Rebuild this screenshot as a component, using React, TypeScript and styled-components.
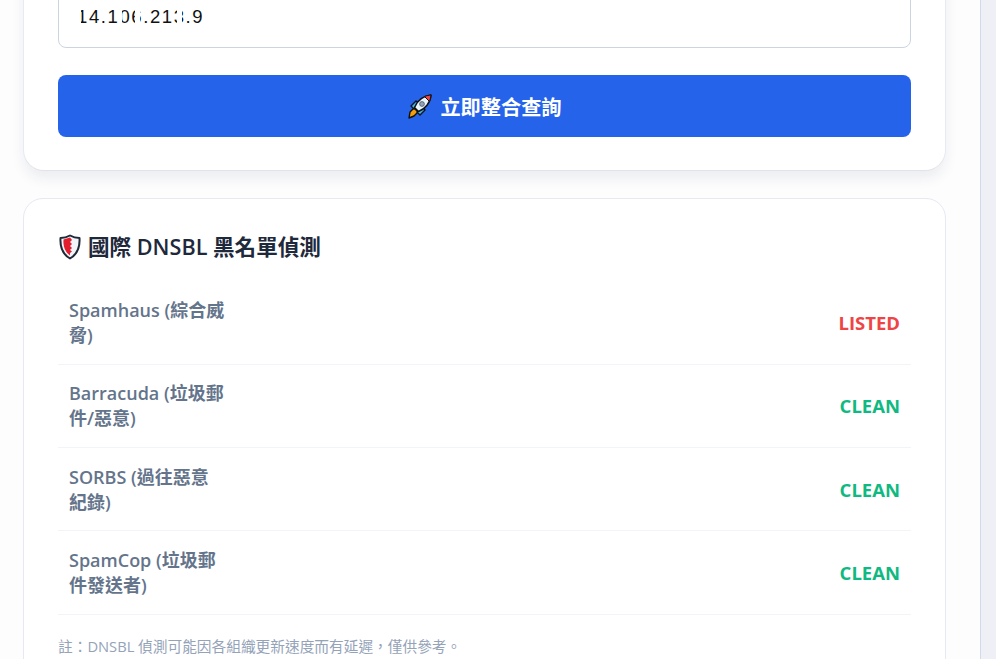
import React from 'react';
import styled, { createGlobalStyle } from 'styled-components';

const GlobalStyle = createGlobalStyle`
  html, body {
    margin: 0;
    padding: 0;
    height: 100%;
    overflow: hidden;
    background: #fdfdfe;
    font-family: "Open Sans", "Noto Sans CJK TC", sans-serif;
  }
`;

const Shell = styled.div`
  display: flex;
  height: 659px;
  overflow: hidden;
`;

const Page = styled.main`
  flex: 1;
  min-width: 0;
  padding: 0 34px 0 23px;
  overflow: hidden;
`;

const Scrollbar = styled.div`
  width: 15px;
  flex: none;
  background: #eef0f6;
  border-left: 1px solid #d3d9e8;
`;

const Card = styled.section`
  box-sizing: border-box;
  background: #fff;
  border-radius: 20px;
  padding: 34px;
  margin-bottom: 28px;
  border: 1px solid #e6e9f2;
`;

const FormCard = styled(Card)`
  margin: -100px 1px 28px;
  height: 270px;
  padding: 60px 34px 0;
  border: none;
  box-shadow: 0 8px 14px rgba(30, 41, 59, 0.08), 0 0 0 1px #f0f2f7;
`;

const IpField = styled.div`
  box-sizing: border-box;
  height: 88px;
  padding: 44px 18px 0;
  border: 1px solid #cbd5e1;
  border-radius: 8px;
  color: #111;
  font-size: 18.5px;
  line-height: 24px;
  letter-spacing: 1.6px;
  font-family: "Liberation Sans", sans-serif;
`;

const Ip = styled.span`
  position: relative;
  display: inline-block;
`;

const Smudge = styled.i<{ $left: number; $width: number }>`
  position: absolute;
  top: 0;
  bottom: 0;
  left: ${({ $left }) => $left}px;
  width: ${({ $width }) => $width}px;
  background: #fff;
`;

const SubmitButton = styled.button`
  display: flex;
  align-items: center;
  justify-content: center;
  gap: 7px;
  width: 100%;
  height: 62px;
  margin-top: 27px;
  border: none;
  border-radius: 8px;
  background: #2563eb;
  color: #fff;
  font-family: inherit;
  font-size: 20.2px;
  font-weight: 700;
`;

const Heading = styled.h2`
  display: flex;
  align-items: center;
  gap: 7px;
  margin: 0 0 20.5px 1px;
  color: #1e293b;
  font-size: 21.6px;
  font-weight: 600;
  line-height: 28px;
`;

const Row = styled.div`
  box-sizing: border-box;
  display: flex;
  align-items: center;
  justify-content: space-between;
  height: 83.33px;
  padding: 0 11px;
  border-bottom: 1px solid #f1f5f9;
`;

const Name = styled.span`
  width: 156px;
  color: #64748b;
  font-size: 18px;
  font-weight: 600;
  line-height: 25px;
  padding-top: 1px;
`;

const Status = styled.span<{ $listed?: boolean }>`
  color: ${({ $listed }) => ($listed ? '#ef4444' : '#10b981')};
  font-size: 18.5px;
  font-weight: 700;
`;

const Note = styled.p`
  margin: 21px 0 0;
  color: #94a3b8;
  font-size: 14.7px;
  line-height: 20px;
`;

const RocketIcon = () => (
  <svg width="26" height="26" viewBox="0 0 26 26">
    <path d="M3 19 L7 15 L11 19 L7 23 L2 25 Z" fill="#f59e0b" stroke="#111" strokeWidth="1.4" strokeLinejoin="round" />
    <path d="M4 13 L9 8 L12 10 L7 16 Z M13 22 L18 17 L16 14 L10 19 Z" fill="#38bdf8" stroke="#111" strokeWidth="1.4" strokeLinejoin="round" />
    <path d="M7.5 14.5 C10 8 16 3 24 2 C23.5 10 18 16 11.5 18.5 Z" fill="#eaf6fb" stroke="#111" strokeWidth="1.5" strokeLinejoin="round" />
    <path d="M17.5 3.5 C20 2.5 22 2.2 24 2 C23.8 4 23.4 6 22.5 8.5 Z" fill="#ef4444" stroke="#111" strokeWidth="1" strokeLinejoin="round" />
    <circle cx="15" cy="11" r="2.4" fill="#94a3b8" stroke="#475569" strokeWidth="0.8" />
  </svg>
);

const ShieldIcon = () => (
  <svg width="22" height="26" viewBox="0 0 22 26">
    <path d="M11 1.5 C14 3.2 17 4 20.5 4 C21 12 19 20 11 24.5 C3 20 1 12 1.5 4 C5 4 8 3.2 11 1.5 Z" fill="#f1f5f9" stroke="#1f2937" strokeWidth="2" strokeLinejoin="round" />
    <path d="M11 3.5 L4.5 5.5 C4 12 6 18 11 21.5 L11 19 L13 17.5 L11 16 L13 14 L11 12 L13 10 L11 8 L13 6 Z" fill="#e11d2e" />
  </svg>
);

const rows = [
  { name: 'Spamhaus (綜合威脅)', status: 'LISTED', listed: true },
  { name: 'Barracuda (垃圾郵件/惡意)', status: 'CLEAN' },
  { name: 'SORBS (過往惡意紀錄)', status: 'CLEAN' },
  { name: 'SpamCop (垃圾郵件發送者)', status: 'CLEAN' },
];

const App = () => {
  return (
    <Shell>
      <GlobalStyle />
      <Page>
        <FormCard>
          <IpField>
            <Ip>
              14.106.213.9
              <Smudge $left={0} $width={4} />
              <Smudge $left={42} $width={3} />
              <Smudge $left={58} $width={5} />
              <Smudge $left={100} $width={5} />
            </Ip>
          </IpField>
          <SubmitButton>
            <RocketIcon />
            立即整合查詢
          </SubmitButton>
        </FormCard>
        <Card>
          <Heading>
            <ShieldIcon />
            國際 DNSBL 黑名單偵測
          </Heading>
          {rows.map((row) => (
            <Row key={row.name}>
              <Name>{row.name}</Name>
              <Status $listed={row.listed}>{row.status}</Status>
            </Row>
          ))}
          <Note>註：DNSBL 偵測可能因各組織更新速度而有延遲，僅供參考。</Note>
        </Card>
      </Page>
      <Scrollbar />
    </Shell>
  );
};

export default App;
